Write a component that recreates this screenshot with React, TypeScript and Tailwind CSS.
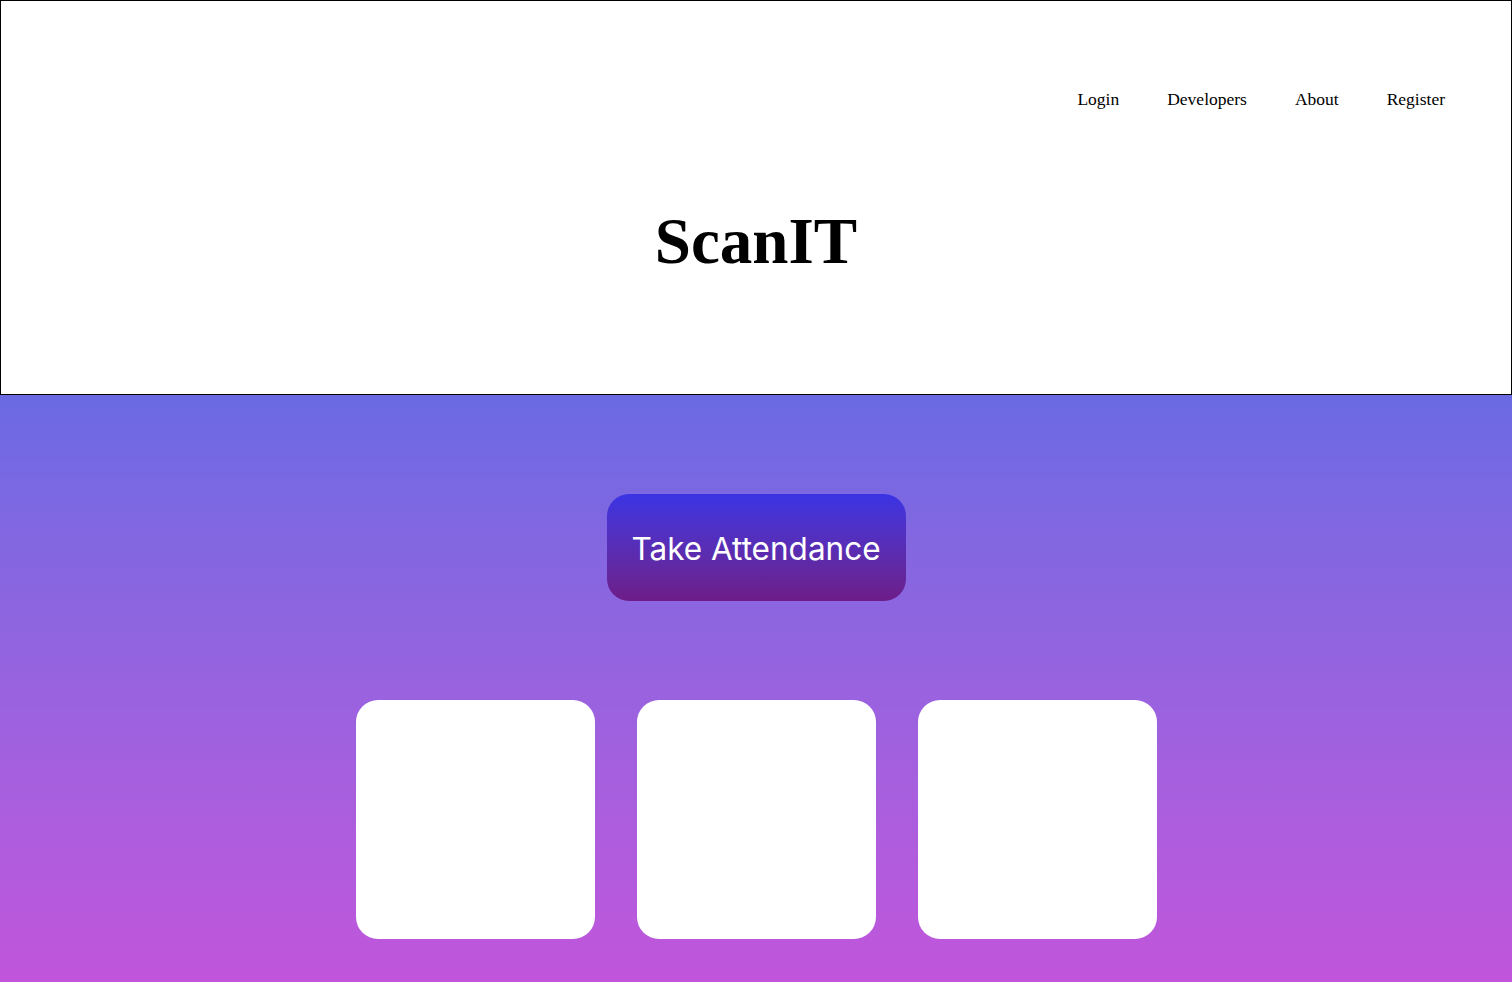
const links = ["Login", "Developers", "About", "Register"];

function Header() {
  return (
    <header className="h-[395px] w-full border border-black bg-white flex flex-col">
      <nav className="flex justify-end gap-[48px] pr-[66px] pt-[87px] font-['Liberation_Serif',serif] text-[17.5px] leading-[22px] text-black">
        {links.map((l) => (
          <a key={l} href="#" className="hover:underline">
            {l}
          </a>
        ))}
      </nav>
      <h1 className="mt-[93px] text-center font-['Liberation_Serif',serif] text-[65px] leading-[76px] font-bold text-black">
        ScanIT
      </h1>
    </header>
  );
}

export default function App() {
  return (
    <div className="min-h-screen w-full flex flex-col">
      <Header />
      <main className="flex-1 w-full bg-gradient-to-b from-[#6a6ae3] to-[#c155db] flex flex-col items-center pt-[99px] pb-[43px]">
        <button className="h-[107px] w-[299px] rounded-[22px] bg-gradient-to-b from-[#3a33e4] to-[#6d1c88] pt-[2px] font-['Inter',sans-serif] text-[31.5px] text-white">
          Take Attendance
        </button>
        <div className="mt-[99px] flex gap-[42px]">
          {[1, 2, 3].map((i) => (
            <div key={i} className="h-[239px] w-[239px] rounded-[22px] bg-white" />
          ))}
        </div>
      </main>
    </div>
  );
}
